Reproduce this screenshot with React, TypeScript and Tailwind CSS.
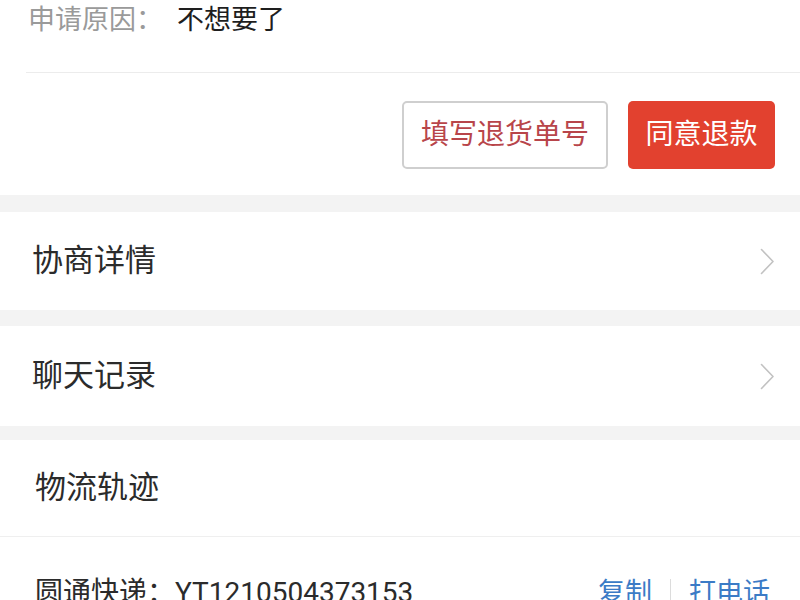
const font = { fontFamily: '"Roboto", "Noto Sans CJK SC", sans-serif' };

const Chevron = () => (
  <svg width="15" height="27" viewBox="0 0 15 27" fill="none">
    <path d="M1.5 1.5 L13 13.5 L1.5 25.5" stroke="#c2c2c2" strokeWidth="1.6" strokeLinecap="round" strokeLinejoin="round" />
  </svg>
);

const NavRow = ({ title, height }: { title: string; height: string }) => (
  <div className={`flex items-center justify-between bg-white pl-[32px] pr-[25px] ${height}`}>
    <span className="text-[31px] text-[#2b2b2b]">{title}</span>
    <Chevron />
  </div>
);

const App = () => {
  return (
    <div className="h-[600px] w-[800px] overflow-hidden bg-[#f3f3f3]" style={font}>
      {/* reason + actions */}
      <div className="bg-white">
        <div className="ml-[26px] flex h-[73px] items-start border-b border-[#ececec] pl-[2px]">
          <span className="text-[27px] leading-[40px] text-[#9a9a9a]">申请原因：</span>
          <span className="ml-[14px] text-[27px] leading-[40px] text-[#1e1e1e]">不想要了</span>
        </div>
        <div className="flex justify-end gap-[20px] pt-[28px] pb-[26px] pr-[25px]">
          <button className="h-[68px] w-[206px] rounded-[5px] border-2 border-[#cfcfcf] bg-white text-[28px] text-[#b8454a]">
            填写退货单号
          </button>
          <button className="h-[68px] w-[147px] rounded-[5px] bg-[#e2412f] text-[28px] text-white">
            同意退款
          </button>
        </div>
      </div>

      <div className="h-[17px]" />
      <NavRow title="协商详情" height="h-[98px]" />
      <div className="h-[16px]" />
      <NavRow title="聊天记录" height="h-[100px]" />
      <div className="h-[14px]" />

      {/* logistics */}
      <div className="bg-white">
        <div className="flex h-[97px] items-center border-b border-[#efefef] pl-[35px]">
          <span className="text-[31px] text-[#2b2b2b]">物流轨迹</span>
        </div>
        <div className="flex items-start justify-between pt-[36px] pl-[35px] pr-[30px]">
          <span className="text-[28px] leading-[40px] text-[#2b2b2b]">圆通快递：YT1210504373153</span>
          <div className="flex items-center text-[27px] leading-[40px] text-[#3b7bc6]">
            <span>复制</span>
            <span className="mx-[18px] h-[28px] w-px bg-[#dcdcdc]" />
            <span>打电话</span>
          </div>
        </div>
      </div>
    </div>
  );
};

export default App;
